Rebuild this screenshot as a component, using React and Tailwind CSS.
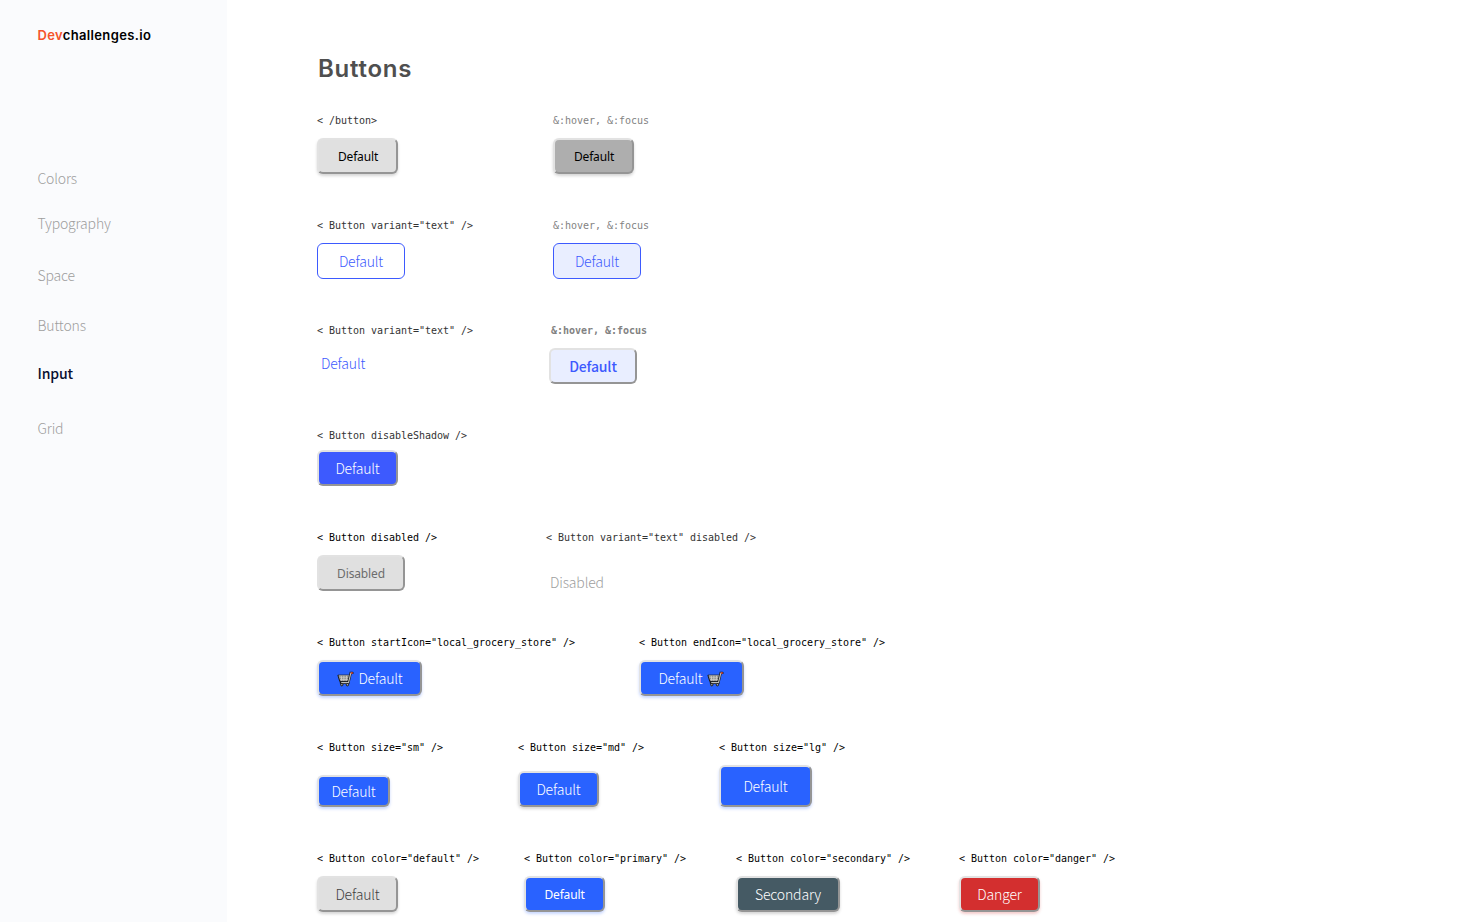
const LIGHT = "font-['Noto_Sans_CJK_JP',sans-serif] font-light text-[14px] tracking-[-0.16px]";
const SANS = "font-['Noto_Sans',sans-serif] text-[12px] tracking-[-0.15px] pt-[2px]";
const RAISED =
  "border-2 border-t-[#e2e2e2] border-l-[#e2e2e2] border-r-[#959595] border-b-[#959595]";
const GREY_SHADOW = "shadow-[0_2px_3px_rgba(51,51,51,0.2)]";
const BLUE_SHADOW = "shadow-[0_2px_3px_rgba(41,98,255,0.25)]";

function Cart() {
  return (
    <svg viewBox="0 0 17 16" className="mt-[2px] h-4 w-[17px] shrink-0" fill="none">
      <path d="M.9 4.2h12l-1.5 6.4H2.8z" fill="#777" stroke="#1a1a1a" strokeWidth="1" />
      <path d="M1.8 4.9h10.4M2.4 6.8h9.4M3 8.7h8.4M4.2 4.8l.7 5.4M6.9 4.8v5.4M9.6 4.8l-.5 5.4" stroke="#d4d0ca" strokeWidth=".9" />
      <path d="M15.4 1.9h-1.7l-2.3 9.9H3.9" stroke="#1a1a1a" strokeWidth="2.4" strokeLinecap="round" />
      <path d="M14.6 2h-.8l-2.3 9.6H4.2" stroke="#bdbdbd" strokeWidth="1.1" />
      <path d="M14 2h1.8" stroke="#e8452e" strokeWidth="1.6" />
      <circle cx="4.8" cy="13.7" r="1.2" fill="#aaa" stroke="#1a1a1a" />
      <circle cx="10.4" cy="13.7" r="1.2" fill="#aaa" stroke="#1a1a1a" />
    </svg>
  );
}

function Button({ className, children }) {
  return (
    <button className={`flex shrink-0 items-center justify-center rounded-[6px] whitespace-nowrap ${className}`}>
      {children}
    </button>
  );
}

function Cell({ label, width, labelClass = "text-black", gap = "mt-3", children }) {
  return (
    <div className={`shrink-0 ${width}`}>
      <div
        className={`h-3 font-['DejaVu_Sans_Mono',monospace] text-[10px] leading-[14px] tracking-[-0.02px] whitespace-pre ${labelClass}`}
      >
        {label}
      </div>
      <div className={gap}>{children}</div>
    </div>
  );
}

function NavItem({ className, children }) {
  return <a className={`block h-5 leading-5 ${className}`}>{children}</a>;
}

export default function App() {
  return (
    <div className="flex h-[922px] overflow-hidden bg-white">
      <aside className="w-[227px] shrink-0 bg-[#fafbfd] pl-[37.5px]">
        <div className="mt-[25px] h-5 font-['Inter',sans-serif] text-[13px] leading-5 font-semibold tracking-[0.35px] text-black">
          <span className="text-[#f5542c]">Dev</span>challenges.io
        </div>
        <nav className={`mt-[123px] text-[#9e9e9e] ${LIGHT}`}>
          <NavItem>Colors</NavItem>
          <NavItem className="mt-[25px]">Typography</NavItem>
          <NavItem className="mt-8">Space</NavItem>
          <NavItem className="mt-[30px]">Buttons</NavItem>
          <NavItem className="mt-7 font-medium text-[#090f31]">Input</NavItem>
          <NavItem className="mt-[35px]">Grid</NavItem>
        </nav>
      </aside>
      <main className="flex-1 pl-[90px]">
        <h1 className="mt-[51px] h-[35px] pl-px font-['Inter',sans-serif] text-[24px] leading-9 font-semibold tracking-[0.75px] text-[#4f4f4f]">
          Buttons
        </h1>
        <div className="mt-7 flex h-[105px]">
          <Cell label="< /button>" width="w-[236px]" labelClass="text-[#333]">
            <Button className={`h-9 w-[81px] bg-[#e0e0e0] pl-px text-black ${RAISED} ${GREY_SHADOW} ${SANS}`}>Default</Button>
          </Cell>
          <Cell label="&:hover, &:focus" width="w-[236px]" labelClass="text-[#828282]">
            <Button className={`h-9 w-[81px] bg-[#aeaeae] pl-px text-black ${RAISED} ${GREY_SHADOW} ${SANS}`}>Default</Button>
          </Cell>
        </div>
        <div className="flex h-[105px]">
          <Cell label={'< Button variant="text" />'} width="w-[236px]" labelClass="text-[#333]">
            <Button className={`h-9 w-[88px] border border-[#3d5afe] bg-white text-[#3d5afe] ${LIGHT}`}>Default</Button>
          </Cell>
          <Cell label="&:hover, &:focus" width="w-[236px]" labelClass="text-[#828282]">
            <Button className={`h-9 w-[88px] border border-[#3d5afe] bg-[#e9eeff] text-[#3d5afe] ${LIGHT}`}>Default</Button>
          </Cell>
        </div>
        <div className="flex h-[105px]">
          <Cell label={'< Button variant="text" />'} width="w-[232px]" labelClass="text-[#333]" gap="mt-[11px]">
            <Button className={`h-8 pl-1 text-[#3d5afe] ${LIGHT}`}>Default</Button>
          </Cell>
          <Cell label="&:hover, &:focus" width="w-[236px]" labelClass="pl-[2px] font-bold text-[#828282]">
            <Button className={`h-9 w-[88px] bg-[#e9eeff] text-[#3d5afe] ${RAISED} ${LIGHT} font-medium`}>Default</Button>
          </Cell>
        </div>
        <div className="flex h-[102px]">
          <Cell label="< Button disableShadow />" width="w-[236px]" labelClass="text-[#333]" gap="mt-[9px]">
            <Button className={`h-9 w-[81px] bg-[#3d5afe] text-white ${RAISED} ${LIGHT}`}>Default</Button>
          </Cell>
        </div>
        <div className="flex h-[105px]">
          <Cell label="< Button disabled />" width="w-[229px]">
            <Button className={`h-9 w-[88px] bg-[#e0e0e0] text-[#6d6d6d] ${RAISED} ${SANS}`}>Disabled</Button>
          </Cell>
          <Cell label={'< Button variant="text" disabled />'} width="w-[236px]" labelClass="text-[#333]" gap="mt-[21px]">
            <Button className={`h-9 pl-1 text-[#9e9e9e] ${LIGHT}`}>Disabled</Button>
          </Cell>
        </div>
        <div className="flex h-[105px]">
          <Cell label={'< Button startIcon="local_grocery_store" />'} width="w-[322px]">
            <Button className={`h-9 w-[105px] gap-1 bg-[#2962ff] pl-px text-white ${RAISED} ${BLUE_SHADOW} ${LIGHT}`}>
              <Cart />
              Default
            </Button>
          </Cell>
          <Cell label={'< Button endIcon="local_grocery_store" />'} width="w-[300px]">
            <Button className={`h-9 w-[105px] gap-1 bg-[#2962ff] pr-px text-white ${RAISED} ${BLUE_SHADOW} ${LIGHT}`}>
              Default
              <Cart />
            </Button>
          </Cell>
        </div>
        <div className="flex h-[111px]">
          <Cell label={'< Button size="sm" />'} width="w-[201px]" gap="mt-[22px]">
            <Button className={`h-8 w-[73px] bg-[#2962ff] text-white ${RAISED} ${BLUE_SHADOW} ${LIGHT}`}>Default</Button>
          </Cell>
          <Cell label={'< Button size="md" />'} width="w-[201px]" gap="mt-[18px]">
            <Button className={`h-9 w-[81px] bg-[#2962ff] text-white ${RAISED} ${GREY_SHADOW} ${LIGHT}`}>Default</Button>
          </Cell>
          <Cell label={'< Button size="lg" />'} width="w-[201px]">
            <Button className={`h-[42px] w-[93px] bg-[#2962ff] text-white ${RAISED} ${BLUE_SHADOW} ${LIGHT}`}>Default</Button>
          </Cell>
        </div>
        <div className="flex h-[70px]">
          <Cell label={'< Button color="default" />'} width="w-[207px]">
            <Button className={`h-9 w-[81px] bg-[#e0e0e0] text-[#3f3f3f] ${RAISED} ${GREY_SHADOW} ${LIGHT}`}>Default</Button>
          </Cell>
          <Cell label={'< Button color="primary" />'} width="w-[212px]">
            <Button className={`h-9 w-[81px] bg-[#2962ff] text-white ${RAISED} ${BLUE_SHADOW} ${SANS}`}>Default</Button>
          </Cell>
          <Cell label={'< Button color="secondary" />'} width="w-[223px]">
            <Button className={`h-9 w-[104px] bg-[#455a64] text-white ${RAISED} ${GREY_SHADOW} ${LIGHT}`}>Secondary</Button>
          </Cell>
          <Cell label={'< Button color="danger" />'} width="w-[200px]">
            <Button className={`h-9 w-[81px] bg-[#d32f2f] text-white ${RAISED} shadow-[0_2px_3px_rgba(211,47,47,0.25)] ${LIGHT}`}>Danger</Button>
          </Cell>
        </div>
      </main>
    </div>
  );
}
